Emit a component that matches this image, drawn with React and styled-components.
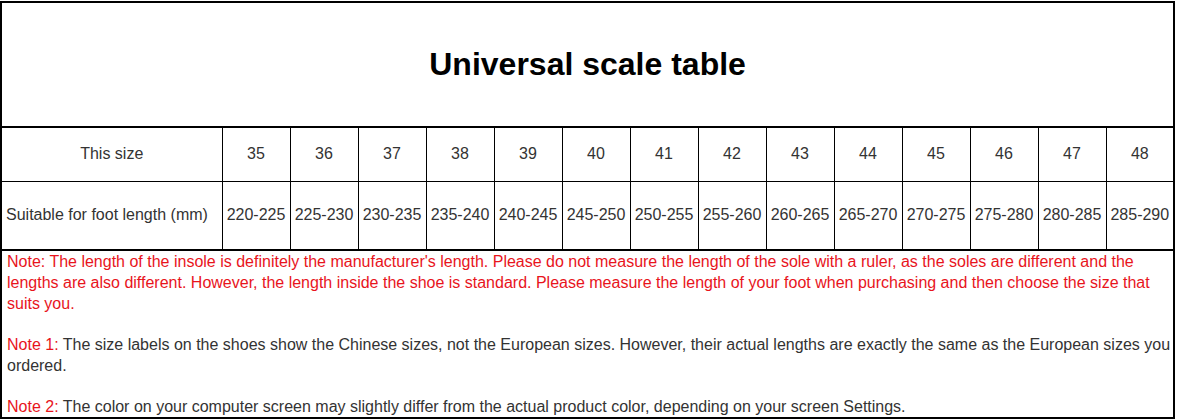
import React from "react";
import styled, { createGlobalStyle } from "styled-components";

const Global = createGlobalStyle`
  html, body { margin: 0; padding: 0; background: #fff; }
  body { font-family: "Liberation Sans", Arial, sans-serif; }
`;

const Page = styled.div`
  padding-top: 1px;
`;

const Table = styled.table`
  width: 1175px;
  border-collapse: collapse;
  table-layout: fixed;
  border: 2px solid #000;
  font-family: "Liberation Sans", Arial, sans-serif;
`;

const TitleCell = styled.td`
  height: 123px;
  padding: 0;
  text-align: center;
  vertical-align: middle;
  font-size: 32px;
  font-weight: bold;
  color: #000;
  border: 1px solid #000;
  border-bottom-width: 2px;
`;

const Cell = styled.td`
  height: ${(p) => p.$h}px;
  padding: 0 ${(p) => (p.$label ? "4px" : "0")};
  text-align: ${(p) => (p.$left ? "left" : "center")};
  vertical-align: middle;
  font-size: 16px;
  color: #333;
  border: 1px solid #000;
  white-space: nowrap;
  box-sizing: border-box;
`;

const NotesCell = styled.td`
  height: 166px;
  padding: 0 1px 0 5px;
  vertical-align: top;
  font-size: 16px;
  line-height: 21px;
  color: #333;
  border: 1px solid #000;
  border-top-width: 2px;
  overflow: hidden;
`;

const NotesBox = styled.div`
  height: 165px;
  overflow: hidden;
`;

const Para = styled.p`
  margin: 0 0 20px;
  color: ${(p) => (p.$red ? "#e8141c" : "#333")};
`;

const Red = styled.span`
  color: #e8141c;
`;

const sizes = [35, 36, 37, 38, 39, 40, 41, 42, 43, 44, 45, 46, 47, 48];

export default function App() {
  return (
    <Page>
      <Global />
      <Table>
        <colgroup>
          <col style={{ width: 221 }} />
          {sizes.map((s) => (
            <col key={s} style={{ width: 68 }} />
          ))}
        </colgroup>
        <tbody>
          <tr>
            <TitleCell colSpan={15}>Universal scale table</TitleCell>
          </tr>
          <tr>
            <Cell $h={54}>This size</Cell>
            {sizes.map((s) => (
              <Cell key={s} $h={54}>{s}</Cell>
            ))}
          </tr>
          <tr>
            <Cell $h={69} $left $label>Suitable for foot length (mm)</Cell>
            {sizes.map((s) => {
              const a = 220 + (s - 35) * 5;
              return (
                <Cell key={s} $h={69}>
                  {a}-{a + 5}
                </Cell>
              );
            })}
          </tr>
          <tr>
            <NotesCell colSpan={15}>
              <NotesBox>
                <Para $red>
                  Note: The length of the insole is definitely the manufacturer's length. Please do not measure the length of the sole with a ruler, as the soles are different and the lengths are also different. However, the length inside the shoe is standard. Please measure the length of your foot when purchasing and then choose the size that suits you.
                </Para>
                <Para>
                  <Red>Note 1:</Red> The size labels on the shoes show the Chinese sizes, not the European sizes. However, their actual lengths are exactly the same as the European sizes you ordered.
                </Para>
                <Para>
                  <Red>Note 2:</Red> The color on your computer screen may slightly differ from the actual product color, depending on your screen Settings.
                </Para>
              </NotesBox>
            </NotesCell>
          </tr>
        </tbody>
      </Table>
    </Page>
  );
}
